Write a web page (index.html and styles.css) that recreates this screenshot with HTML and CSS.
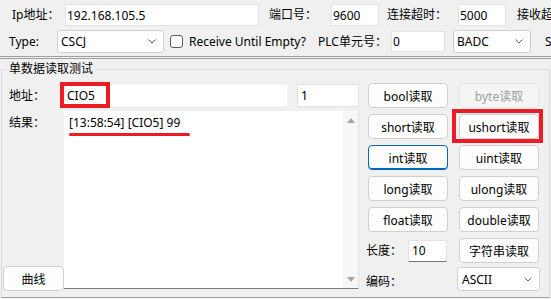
FILE: index.html
```html
<!DOCTYPE html>
<html lang="zh-CN">
<head>
    <meta charset="UTF-8">
    <title>Omron Fins</title>
    <link rel="stylesheet" href="styles.css">
</head>
<body>
<div class="window">
    <div class="conn-row">
        <span class="lbl lbl-ip">Ip地址：</span>
        <div class="textbox tb-ip">192.168.105.5</div>
        <span class="lbl lbl-port">端口号：</span>
        <div class="textbox tb-port">9600</div>
        <span class="lbl lbl-timeout">连接超时：</span>
        <div class="textbox tb-timeout">5000</div>
        <span class="lbl lbl-recv">接收超时：</span>
    </div>
    <div class="conn-row row2">
        <span class="lbl lbl-type">Type:</span>
        <div class="combo combo-type">
            <span>CSCJ</span>
            <svg class="chevron" width="8" height="5" viewBox="0 0 8 5"><polyline points="0.5,0.5 4,4 7.5,0.5" fill="none" stroke="#5f5f5f" stroke-width="1"/></svg>
        </div>
        <div class="check"><span class="check-box"></span>Receive Until Empty?</div>
        <span class="lbl lbl-plc">PLC单元号：</span>
        <div class="textbox tb-plc">0</div>
        <div class="combo combo-fmt">
            <span>BADC</span>
            <svg class="chevron" width="8" height="5" viewBox="0 0 8 5"><polyline points="0.5,0.5 4,4 7.5,0.5" fill="none" stroke="#5f5f5f" stroke-width="1"/></svg>
        </div>
        <span class="lbl lbl-s">Station</span>
    </div>
    <div class="separator"></div>

    <fieldset class="group">
        <legend>单数据读取测试</legend>
        <div class="group-body">
            <div class="left">
                <div class="addr-row">
                    <span class="lbl side-lbl">地址：</span>
                    <div class="mark-wrap addr-wrap">
                        <div class="textbox tb-addr">CIO5</div>
                        <div class="mark mark-addr"></div>
                    </div>
                    <div class="textbox tb-count">1</div>
                </div>
                <div class="result-row">
                    <div class="side">
                        <span class="lbl side-lbl result-lbl">结果：</span>
                        <button class="btn btn-curve">曲线</button>
                    </div>
                    <div class="result">
                        <div class="result-text">
                            <div class="result-line">[13:58:54] [CIO5] 99</div>
                            <div class="underline"></div>
                        </div>
                        <div class="vscroll">
                            <span class="arrow arrow-up"></span>
                            <span class="arrow arrow-down"></span>
                        </div>
                    </div>
                </div>
            </div>

            <div class="buttons">
                <button class="btn">bool读取</button>
                <button class="btn" disabled>byte读取</button>
                <button class="btn">short读取</button>
                <div class="mark-wrap">
                    <button class="btn">ushort读取</button>
                    <div class="mark mark-ushort"></div>
                </div>
                <button class="btn btn-focus">int读取</button>
                <button class="btn">uint读取</button>
                <button class="btn">long读取</button>
                <button class="btn">ulong读取</button>
                <button class="btn">float读取</button>
                <button class="btn">double读取</button>
                <div class="len-cell">
                    <span class="lbl">长度：</span>
                    <div class="textbox tb-len">10</div>
                </div>
                <button class="btn">字符串读取</button>
                <div class="enc-cell">
                    <span class="lbl">编码：</span>
                </div>
                <div class="combo combo-enc">
                    <span>ASCII</span>
                    <svg class="chevron" width="8" height="5" viewBox="0 0 8 5"><polyline points="0.5,0.5 4,4 7.5,0.5" fill="none" stroke="#5f5f5f" stroke-width="1"/></svg>
                </div>
            </div>
        </div>
    </fieldset>
</div>
</body>
</html>
```

FILE: styles.css
```css
body {
    margin: 0;
    background-color: #f0f0f0;
    font-family: "Noto Sans", "Noto Sans CJK SC", sans-serif;
    font-size: 12px;
    color: #000000;
    overflow: hidden;
}
.window {
    width: 551px;
    height: 299px;
    overflow: hidden;
}
.conn-row {
    display: flex;
    align-items: center;
    height: 22px;
    margin-top: 4px;
    white-space: nowrap;
}
.row2 {
    height: 23px;
}
.lbl {
    flex: none;
    line-height: 16px;
    box-sizing: border-box;
}
.textbox {
    flex: none;
    box-sizing: border-box;
    display: flex;
    align-items: center;
    height: 22px;
    padding-left: 1px;
    background-color: #ffffff;
    border: 1px solid #e3e3e3;
}
.combo {
    flex: none;
    box-sizing: border-box;
    display: flex;
    align-items: center;
    justify-content: space-between;
    height: 23px;
    padding: 0 7px 0 3px;
    background-color: #ffffff;
    border: 1px solid #d0d0d0;
    border-radius: 3px;
}
.chevron {
    display: block;
}

/* connection rows */
.lbl-ip { margin-left: 12px; width: 53px; }
.tb-ip { width: 194px; }
.lbl-port { margin-left: 10px; width: 62px; }
.tb-port { width: 48px; }
.lbl-timeout { margin-left: 8px; width: 71px; }
.tb-timeout { width: 48px; }
.lbl-recv { margin-left: 11px; }

.lbl-type { margin-left: 9px; width: 48px; }
.combo-type { width: 107px; }
.check {
    flex: none;
    display: flex;
    align-items: center;
    width: 148px;
    margin-left: 6px;
}
.check-box {
    box-sizing: border-box;
    width: 13px;
    height: 13px;
    margin-right: 6px;
    background-color: #ffffff;
    border: 1px solid #5a5a5a;
    border-radius: 3px;
}
.lbl-plc { width: 73px; }
.tb-plc { width: 54px; height: 21px; }
.combo-fmt { margin-left: 8px; width: 78px; }
.lbl-s { margin-left: 14px; }

.separator {
    height: 1px;
    margin-top: 3px;
    border-top: 1px solid #a0a0a0;
    border-bottom: 1px solid #a0a0a0;
}

/* group box */
.group {
    box-sizing: border-box;
    width: 549px;
    height: 236px;
    margin: 3px 0 0 1px;
    padding: 0 0 0 1px;
    border: 1px solid #dcdcdc;
    border-bottom-color: #a0a0a0;
    min-inline-size: 0;
}
.group legend {
    margin-left: 4px;
    padding: 0 2px;
    line-height: 14px;
}
.group-body {
    display: flex;
    gap: 9px;
    padding-top: 7px;
}
.left {
    width: 356px;
}
.addr-row {
    display: flex;
    align-items: center;
    height: 23px;
    margin-top: 1px;
}
.side-lbl {
    width: 61px;
    padding-left: 6px;
}
.mark-wrap {
    position: relative;
}
.mark {
    position: absolute;
    border: 4px solid #ec1c24;
    pointer-events: none;
}
.tb-addr {
    width: 224px;
    height: 23px;
    padding-left: 2px;
    border-color: #f4f4f4;
}
.mark-addr {
    left: -4px;
    top: -2px;
    width: 42px;
    height: 18px;
}
.tb-count {
    width: 62px;
    height: 23px;
    margin-left: 9px;
    padding-left: 3px;
}
.result-row {
    display: flex;
    align-items: flex-start;
    margin-top: 4px;
}
.side {
    display: flex;
    flex-direction: column;
    justify-content: space-between;
    width: 61px;
    height: 180px;
}
.result-lbl {
    padding-top: 4px;
}
.btn-curve {
    width: 51px;
    height: 24px;
}
.result {
    box-sizing: border-box;
    display: flex;
    width: 295px;
    height: 178px;
    background-color: #ffffff;
    border-right: 1px solid #e6e6e6;
    border-bottom: 1px solid #7a7a7a;
}
.result-text {
    flex: 1;
    padding: 4px 0 0 5px;
}
.result-line {
    line-height: 15px;
}
.underline {
    width: 121px;
    height: 3px;
    margin-top: 3px;
    background-color: #ec1c24;
    border-radius: 2px;
}
.vscroll {
    display: flex;
    flex-direction: column;
    justify-content: space-between;
    align-items: center;
    width: 15px;
    padding: 7px 0 6px;
    box-sizing: border-box;
    background-color: #f7f7f7;
}
.arrow {
    width: 0;
    height: 0;
    border-left: 4.5px solid transparent;
    border-right: 4.5px solid transparent;
}
.arrow-up {
    border-bottom: 5px solid #a6a6a6;
}
.arrow-down {
    border-top: 5px solid #a6a6a6;
}

/* read buttons */
.buttons {
    display: grid;
    grid-template-columns: 80px 80px;
    grid-auto-rows: 25px;
    column-gap: 11px;
    row-gap: 6px;
}
.btn {
    box-sizing: border-box;
    width: 100%;
    height: 25px;
    padding: 0;
    font: inherit;
    color: #000000;
    background-color: #fdfdfd;
    border: 1px solid #d0d0d0;
    border-radius: 4px;
}
.btn:disabled {
    color: #a0a0a0;
    background-color: #f5f5f5;
    border-color: #e5e5e5;
}
.btn-focus {
    border-color: #0067c0;
    box-shadow: inset 0 -1px 0 #0067c0;
}
.mark-ushort {
    left: -7px;
    top: -5px;
    right: -4px;
    bottom: -4px;
}
.len-cell, .enc-cell {
    display: flex;
    align-items: center;
    margin-left: -2px;
}
.len-cell .lbl {
    width: 42px;
}
.tb-len {
    width: 39px;
    height: 22px;
    padding-left: 3px;
    border-bottom-color: #7a7a7a;
}
.combo-enc {
    height: 24px;
    margin: -2px 0 0 -2px;
    width: 83px;
    padding-left: 4px;
}
```
